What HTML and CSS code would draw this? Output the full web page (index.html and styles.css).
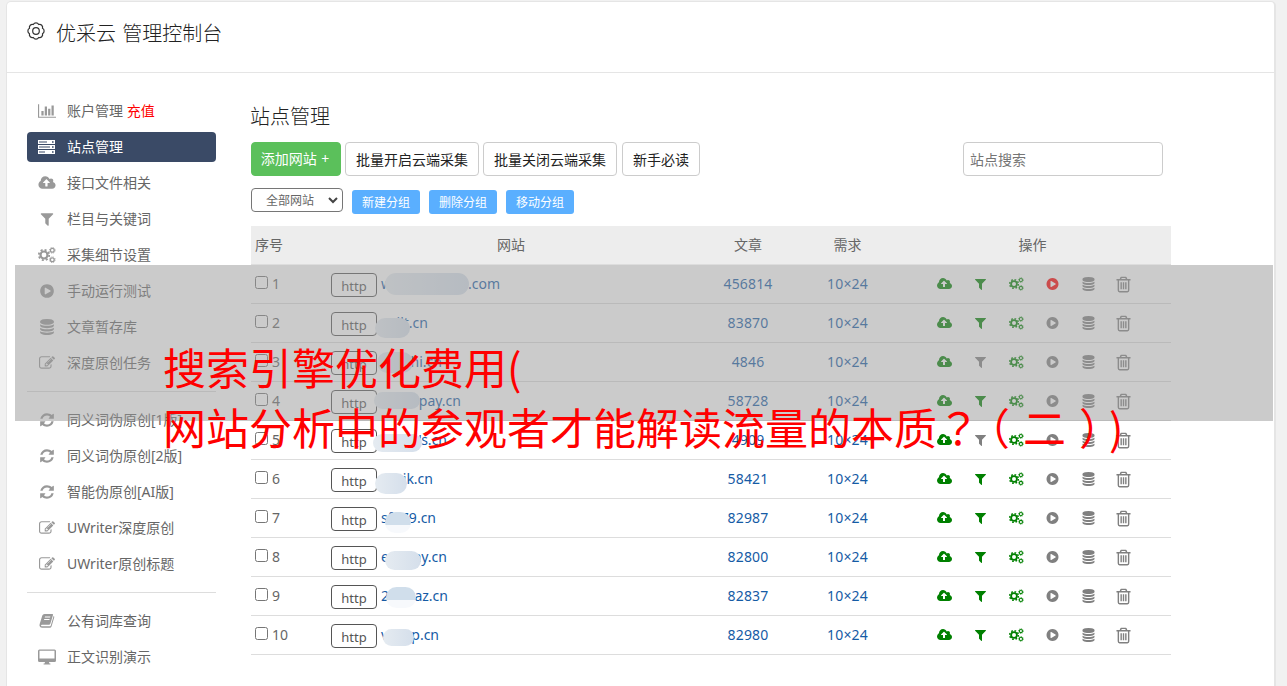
FILE: index.html
```html
<!DOCTYPE html>
<html lang="zh-CN">
<head>
<meta charset="utf-8">
<title>优采云 管理控制台</title>
<link rel="stylesheet" href="styles.css">
</head>
<body>
<svg class="sprite" width="0" height="0">
<symbol id="chart" viewBox="0 0 2048 1792"><path d="M640 896v512h-256v-512h256zm384-512v1024h-256v-1024h256zm1024 1152v128h-2048v-1536h128v1408h1920zm-640-896v768h-256v-768h256zm384-384v1152h-256v-1152h256z"/></symbol>
<symbol id="server" viewBox="0 0 17 14"><path fill-rule="evenodd" d="M0 0h17v4H0zM1 1.5v1h8v-1zM14 1.2v1.6h1.6V1.2zM0 5h17v4H0zM1 6.5v1h11v-1zM14 6.2v1.6h1.6V6.2zM0 10h17v4H0zM1 11.5v1h6v-1zM14 11.2v1.6h1.6v-1.6z"/></symbol>
<symbol id="cloud" viewBox="0 0 1920 1792"><path d="M1280 864q0-14-9-23l-352-352q-9-9-23-9t-23 9l-351 351q-10 12-10 24 0 14 9 23t23 9h224v352q0 13 9.5 22.5t22.5 9.5h192q13 0 22.5-9.5t9.5-22.5v-352h224q13 0 22.5-9.5t9.5-22.5zm640 288q0 159-112.500 271.500t-271.500 112.500h-1088q-185 0-316.500-131.500t-131.500-316.500q0-130 70-240t188-165q-2-30-2-43 0-212 150-362t362-150q156 0 285.500 87t188.500 231q71-62 166-62 106 0 181 75t75 181q0 76-41 138 130 31 213.500 135.500t83.500 238.500z"/></symbol>
<symbol id="filter" viewBox="0 0 1792 1792"><path d="M1595 295q17 41-14 70l-493 493v742q0 42-39 59-13 5-25 5-27 0-45-19l-256-256q-19-19-19-45v-486l-493-493q-31-29-14-70 17-39 59-39h1280q42 0 59 39z"/></symbol>
<symbol id="gears" viewBox="0 0 18 16"><g fill="none" stroke="currentColor"><circle cx="6" cy="8" r="3.500" stroke-width="2.200"/><circle cx="6" cy="8" r="5.200" stroke-width="1.800" stroke-dasharray="2.040 2.040"/><circle cx="14.300" cy="3.300" r="1.900" stroke-width="1.300"/><circle cx="14.300" cy="3.300" r="2.900" stroke-width=".8" stroke-dasharray="1.140 1.140"/><circle cx="14.300" cy="12.700" r="1.900" stroke-width="1.300"/><circle cx="14.300" cy="12.700" r="2.900" stroke-width=".8" stroke-dasharray="1.140 1.140"/></g></symbol>
<symbol id="play" viewBox="0 0 1792 1792"><path d="M896 128q209 0 385.500 103t279.500 279.500 103 385.500-103 385.500-279.500 279.500-385.500 103-385.500-103-279.500-279.500-103-385.500 103-385.500 279.500-279.500 385.500-103zm384 823q32-18 32-55t-32-55l-544-320q-31-19-64-1-32 19-32 56v640q0 37 32 56 16 8 32 8 17 0 32-9z"/></symbol>
<symbol id="db" viewBox="0 0 1792 1792"><path d="M896 768q237 0 443-43t325-127v170q0 69-103 128t-280 93.500-385 34.500-385-34.500-280-93.500-103-128v-170q119 84 325 127t443 43zm0 768q237 0 443-43t325-127v170q0 69-103 128t-280 93.500-385 34.500-385-34.500-280-93.500-103-128v-170q119 84 325 127t443 43zm0-384q237 0 443-43t325-127v170q0 69-103 128t-280 93.500-385 34.500-385-34.500-280-93.500-103-128v-170q119 84 325 127t443 43zm0-1152q208 0 385 34.500t280 93.500 103 128v128q0 69-103 128t-280 93.500-385 34.500-385-34.500-280-93.500-103-128v-128q0-69 103-128t280-93.500 385-34.500z"/></symbol>
<symbol id="edit" viewBox="0 0 1792 1792"><path d="M888 1184l116-116-152-152-116 116v56h96v96h56zm440-720q-16-16-33 1l-350 350q-17 17-1 33t33-1l350-350q17-17 1-33zm80 594v190q0 119-84.500 203.500t-203.500 84.500h-832q-119 0-203.500-84.500t-84.500-203.500v-832q0-119 84.500-203.500t203.500-84.500h832q63 0 117 25 15 7 18 23 3 17-9 29l-49 49q-14 14-32 8-23-6-45-6h-832q-66 0-113 47t-47 113v832q0 66 47 113t113 47h832q66 0 113-47t47-113v-126q0-13 9-22l64-64q15-15 35-7t20 29zm-96-738l288 288-672 672h-288v-288zm444 132l-92 92-288-288 92-92q28-28 68-28t68 28l152 152q28 28 28 68t-28 68z"/></symbol>
<symbol id="refresh" viewBox="0 0 1792 1792"><path d="M1639 1056q0 5-1 7-64 268-268 434.500t-478 166.500q-146 0-282.500-55t-243.500-157l-129 129q-19 19-45 19t-45-19-19-45v-448q0-26 19-45t45-19h448q26 0 45 19t19 45-19 45l-137 137q71 66 161 102t187 36q134 0 250-65t186-179q11-17 53-117 8-23 30-23h192q13 0 22.500 9.500t9.500 22.500zm25-800v448q0 26-19 45t-45 19h-448q-26 0-45-19t-19-45 19-45l138-138q-148-137-349-137-134 0-250 65t-186 179q-11 17-53 117-8 23-30 23h-199q-13 0-22.500-9.500t-9.500-22.500v-7q65-268 270-434.500t480-166.500q146 0 284 55.500t245 156.500l130-129q19-19 45-19t45 19 19 45z"/></symbol>
<symbol id="book" viewBox="0 0 16 16"><path fill-rule="evenodd" d="M5.500 1h7.800q1 0 .7 1l-2.600 8.600q-.4 1.200-1.600 1.200H3q-1.200 0-.9.900.2.600 1 .6h7.600q.8 0 1.100-.9L14.600 3q1 .4.600 1.500l-2.600 8.700q-.4 1.500-2 1.500H3Q1 14.700.6 13q-.2-1 .1-2L3.300 2.500Q3.800 1 5.500 1zM6 3.600l-.3.900h5.400l.3-.9zM5.300 6L5 6.900h5.400l.3-.9z"/></symbol>
<symbol id="desktop" viewBox="0 0 18 16"><path fill-rule="evenodd" d="M1.500.5h15q1.500 0 1.500 1.500v9.500q0 1.500-1.500 1.500H11l.4 1.500h1v1H5.600v-1h1L7 13H1.500Q0 13 0 11.500V2Q0 .5 1.500.5zm0 1.200v7.800h15V1.700z"/></symbol>
<symbol id="trash" viewBox="0 0 16 18"><path fill="none" stroke="currentColor" stroke-width="1.500" stroke-linejoin="round" d="M.5 4h15M2.500 4.200v11q0 1.500 1.300 1.500h8.400q1.300 0 1.300-1.500v-11M4.500 3.800l1-2.400h5l1 2.400M5.500 6.500v7.500M8 6.500v7.500M10.500 6.500v7.500"/></symbol>
<symbol id="cog" viewBox="0 0 18 18"><g fill="none" stroke="currentColor" stroke-width="1.200" stroke-linejoin="round"><path d="M6.320 2.530A3 3 0 0 1 11.680 2.530A3 3 0 0 1 15.470 6.320A3 3 0 0 1 15.470 11.680A3 3 0 0 1 11.680 15.470A3 3 0 0 1 6.320 15.470A3 3 0 0 1 2.530 11.680A3 3 0 0 1 2.530 6.320A3 3 0 0 1 6.320 2.530z"/><circle cx="9" cy="9" r="3.300"/></g></symbol>
</svg>

<div class="panel">
  <header class="top"><svg class="cog"><use href="#cog"/></svg><h1>优采云 管理控制台</h1></header>
  <div class="body">
    <nav class="side">
      <a class="item"><svg><use href="#chart"/></svg>账户管理&nbsp;<span class="pay">充值</span></a>
      <a class="item active"><svg class="srv"><use href="#server"/></svg>站点管理</a>
      <a class="item"><svg><use href="#cloud"/></svg>接口文件相关</a>
      <a class="item"><svg><use href="#filter"/></svg>栏目与关键词</a>
      <a class="item"><svg><use href="#gears"/></svg>采集细节设置</a>
      <a class="item"><svg><use href="#play"/></svg>手动运行测试</a>
      <a class="item"><svg><use href="#db"/></svg>文章暂存库</a>
      <a class="item"><svg><use href="#edit"/></svg>深度原创任务</a>
      <div class="rule"></div>
      <a class="item"><svg><use href="#refresh"/></svg>同义词伪原创[1版]</a>
      <a class="item"><svg><use href="#refresh"/></svg>同义词伪原创[2版]</a>
      <a class="item"><svg><use href="#refresh"/></svg>智能伪原创[AI版]</a>
      <a class="item"><svg><use href="#edit"/></svg>UWriter深度原创</a>
      <a class="item"><svg><use href="#edit"/></svg>UWriter原创标题</a>
      <div class="rule"></div>
      <a class="item"><svg><use href="#book"/></svg>公有词库查询</a>
      <a class="item"><svg><use href="#desktop"/></svg>正文识别演示</a>
    </nav>
    <main class="main">
      <h2>站点管理</h2>
      <div class="tools">
        <button class="btn add">添加网站 +</button><button class="btn wide">批量开启云端采集</button><button class="btn wide">批量关闭云端采集</button><button class="btn read">新手必读</button>
        <input class="search" type="text" placeholder="站点搜索">
      </div>
      <div class="groups">
        <div class="select">全部网站<svg viewBox="0 0 10 7"><path d="M1 1l4 4 4-4"/></svg></div>
        <button class="mini">新建分组</button><button class="mini">删除分组</button><button class="mini">移动分组</button>
      </div>
      <div class="row head"><span class="no">序号</span><span>网站</span><span>文章</span><span>需求</span><span>操作</span></div>

      <div class="row"><label class="no"><i class="box"></i>1</label><div class="site"><span class="http">http</span><span class="name" style="width:119px"><span>w</span><span>.com</span><i class="blob" style="left:4px;top:8px;width:84px;height:22px"></i></span></div><span class="num">456814</span><span class="num">10×24</span><div class="ops"><svg class="g"><use href="#cloud"/></svg><svg class="g"><use href="#filter"/></svg><svg class="g"><use href="#gears"/></svg><svg class="r"><use href="#play"/></svg><svg><use href="#db"/></svg><svg class="bin"><use href="#trash"/></svg></div></div>
      <div class="row"><label class="no"><i class="box"></i>2</label><div class="site"><span class="http">http</span><span class="name" style="width:47px"><span></span><span>ilt.cn</span><i class="blob" style="left:-6px;top:14px;width:35px;height:20px"></i></span></div><span class="num">83870</span><span class="num">10×24</span><div class="ops"><svg class="g"><use href="#cloud"/></svg><svg class="g"><use href="#filter"/></svg><svg class="g"><use href="#gears"/></svg><svg><use href="#play"/></svg><svg><use href="#db"/></svg><svg class="bin"><use href="#trash"/></svg></div></div>
      <div class="row"><label class="no"><i class="box"></i>3</label><div class="site"><span class="http">http</span><span class="name" style="width:61px"><span></span><span>hi.cn</span><i class="blob" style="left:-4px;top:9px;width:36px;height:21px"></i></span></div><span class="num">4846</span><span class="num">10×24</span><div class="ops"><svg class="g"><use href="#cloud"/></svg><svg><use href="#filter"/></svg><svg class="g"><use href="#gears"/></svg><svg><use href="#play"/></svg><svg><use href="#db"/></svg><svg class="bin"><use href="#trash"/></svg></div></div>
      <div class="row"><label class="no"><i class="box"></i>4</label><div class="site"><span class="http">http</span><span class="name" style="width:80px"><span></span><span>pay.cn</span><i class="blob" style="left:-7px;top:10px;width:46px;height:17px"></i></span></div><span class="num">58728</span><span class="num">10×24</span><div class="ops"><svg class="g"><use href="#cloud"/></svg><svg class="g"><use href="#filter"/></svg><svg class="g"><use href="#gears"/></svg><svg><use href="#play"/></svg><svg><use href="#db"/></svg><svg class="bin"><use href="#trash"/></svg></div></div>
      <div class="row"><label class="no"><i class="box"></i>5</label><div class="site"><span class="http">http</span><span class="name" style="width:66px"><span></span><span>'s.cn</span><i class="blob" style="left:-8px;top:13px;width:49px;height:18px"></i></span></div><span class="num">4909</span><span class="num">10×24</span><div class="ops"><svg class="g"><use href="#cloud"/></svg><svg><use href="#filter"/></svg><svg class="g"><use href="#gears"/></svg><svg><use href="#play"/></svg><svg><use href="#db"/></svg><svg class="bin"><use href="#trash"/></svg></div></div>
      <div class="row"><label class="no"><i class="box"></i>6</label><div class="site"><span class="http">http</span><span class="name" style="width:52px"><span></span><span>ik.cn</span><i class="blob" style="left:-6px;top:13px;width:32px;height:21px"></i></span></div><span class="num">58421</span><span class="num">10×24</span><div class="ops"><svg class="g"><use href="#cloud"/></svg><svg class="g"><use href="#filter"/></svg><svg class="g"><use href="#gears"/></svg><svg><use href="#play"/></svg><svg><use href="#db"/></svg><svg class="bin"><use href="#trash"/></svg></div></div>
      <div class="row"><label class="no"><i class="box"></i>7</label><div class="site"><span class="http">http</span><span class="name" style="width:55px"><span>sf</span><span>79.cn</span><i class="blob fade" style="left:4px;top:13px;width:26px;height:21px"></i></span></div><span class="num">82987</span><span class="num">10×24</span><div class="ops"><svg class="g"><use href="#cloud"/></svg><svg class="g"><use href="#filter"/></svg><svg class="g"><use href="#gears"/></svg><svg><use href="#play"/></svg><svg><use href="#db"/></svg><svg class="bin"><use href="#trash"/></svg></div></div>
      <div class="row"><label class="no"><i class="box"></i>8</label><div class="site"><span class="http">http</span><span class="name" style="width:66px"><span>e</span><span>ay.cn</span><i class="blob" style="left:4px;top:13px;width:36px;height:19px"></i></span></div><span class="num">82800</span><span class="num">10×24</span><div class="ops"><svg class="g"><use href="#cloud"/></svg><svg class="g"><use href="#filter"/></svg><svg class="g"><use href="#gears"/></svg><svg><use href="#play"/></svg><svg><use href="#db"/></svg><svg class="bin"><use href="#trash"/></svg></div></div>
      <div class="row"><label class="no"><i class="box"></i>9</label><div class="site"><span class="http">http</span><span class="name" style="width:67px"><span>2</span><span>az.cn</span><i class="blob fade" style="left:5px;top:10px;width:30px;height:21px"></i></span></div><span class="num">82837</span><span class="num">10×24</span><div class="ops"><svg class="g"><use href="#cloud"/></svg><svg class="g"><use href="#filter"/></svg><svg class="g"><use href="#gears"/></svg><svg><use href="#play"/></svg><svg><use href="#db"/></svg><svg class="bin"><use href="#trash"/></svg></div></div>
      <div class="row"><label class="no"><i class="box"></i>10</label><div class="site"><span class="http">http</span><span class="name" style="width:58px"><span>v</span><span>p.cn</span><i class="blob" style="left:2px;top:13px;width:31px;height:17px"></i></span></div><span class="num">82980</span><span class="num">10×24</span><div class="ops"><svg class="g"><use href="#cloud"/></svg><svg class="g"><use href="#filter"/></svg><svg class="g"><use href="#gears"/></svg><svg><use href="#play"/></svg><svg><use href="#db"/></svg><svg class="bin"><use href="#trash"/></svg></div></div>
    </main>
  </div>
</div>
<div class="band"></div>
<div class="caption"><div>搜索引擎优化费用(</div><div>网站分析中的参观者才能解读流量的本质<span lang="zh-TW" class="q">？</span><span class="open">（</span>二<span class="close">）</span>)</div></div>
</body>
</html>
```
FILE: styles.css
```css
* { box-sizing: border-box; }
body { margin: 0; height: 686px; overflow: hidden; position: relative; background: #f1f1f1; padding: 1px 11px 0 6px; font: 14px/20px "Noto Sans", "Noto Sans CJK SC", sans-serif; color: #666; }
.sprite { position: absolute; }
svg { fill: currentColor; display: block; overflow: visible; }
.panel { height: 685px; background: #fff; border: 1px solid #e5e5e5; border-right-width: 2px; border-bottom: 0; border-radius: 5px 5px 0 0; }
.top { height: 71px; border-bottom: 1px solid #e5e5e5; display: flex; align-items: flex-start; padding: 20px 0 0 20px; color: #333; }
.cog { width: 18px; height: 18px; }
h1, h2 { margin: 0; font-size: 20px; line-height: 24px; font-weight: 300; color: #222; }
h1 { margin-left: 11px; word-spacing: 1px; }
.body { display: flex; padding: 23px 0 0 20px; }
.side { width: 189px; display: flex; flex-direction: column; gap: 6px; }
.item { height: 30px; display: flex; align-items: center; padding-left: 11px; border-radius: 4px; white-space: nowrap; }
.item svg { width: 18px; height: 16px; margin-right: 11px; color: #999; }
.item .srv { height: 14px; width: 17px; margin-right: 12px; color: #fff; }
.item.active { background: #3a4a66; color: #fff; }
.pay { color: #f00; }
.rule { height: 1px; background: #ddd; margin: 7px 0; }
.main { width: 920px; margin-left: 35px; }
h2 { margin: 9px 0 0 -1px; }
.tools { display: flex; gap: 4px; margin-top: 13px; }
button { font-family: inherit; padding: 0; }
.btn { height: 34px; border: 1px solid #ccc; border-radius: 4px; background: #fff; color: #222; font-size: 14px; }
.add { width: 90px; padding-right: 2px; padding-bottom: 2px; background: #5bc05b; border-color: #5bc05b; color: #fff; word-spacing: 1px; }
.wide { width: 134px; }
.read { width: 78px; margin-left: 1px; }
.search { width: 200px; height: 34px; margin: 0 8px 0 auto; border: 1px solid #ccc; border-radius: 4px; padding: 0 6px; font: 14px "Noto Sans", "Noto Sans CJK SC", sans-serif; }
.search::placeholder { color: #757575; }
.groups { display: flex; gap: 9px; margin-top: 12px; height: 38px; align-items: flex-start; }
.select { width: 92px; height: 24px; border: 1px solid #767676; border-radius: 4px; display: flex; align-items: center; justify-content: space-between; padding: 1px 4px 0 14px; font-size: 12px; }
.select svg { width: 10px; height: 7px; fill: none; stroke: #444; stroke-width: 2; }
.mini { width: 68px; height: 24px; margin-top: 2px; border: 0; border-radius: 3px; background: #5aafff; color: #fff; font-size: 12px; }
.row { height: 39px; border-bottom: 1px solid #ddd; display: grid; grid-template-columns: 76px 368px 106px 93px 277px; }
.head { background: #ededed; text-align: center; line-height: 38px; }
.no { text-align: left; padding-left: 4px; }
label.no { display: flex; gap: 4px; padding-top: 9px; }
.box { width: 13px; height: 13px; border: 1px solid #767676; border-radius: 2.5px; background: #fff; margin-top: 2px; }
.site { display: flex; padding-left: 4px; }
.http { width: 46px; height: 24px; margin-top: 8px; border: 1px solid #555; border-radius: 4px; text-align: center; font-size: 13px; line-height: 25px; color: #555; }
.name { position: relative; margin-left: 4px; display: flex; justify-content: space-between; line-height: 38px; color: #155ba5; white-space: nowrap; }
.blob { position: absolute; border-radius: 11px; background: linear-gradient(90deg, #e5ebf1, #d5dfeb); }
.fade { background: linear-gradient(#d0deeb 60%, #f7f9fc 60%); }
.num { text-align: center; line-height: 38px; color: #155ba5; letter-spacing: .15px; }
.ops { display: grid; grid-template-columns: repeat(6, 36px); padding-left: 32px; height: 38px; justify-items: center; align-items: center; color: #808080; }
.ops svg { width: 15px; height: 14px; }
.ops .bin { width: 15px; height: 17px; margin-right: 1px; }
.g { color: green; }
.r { color: #f00; }
.band { position: absolute; left: 15px; top: 265px; width: 1258px; height: 156px; background: rgba(151, 151, 151, .5); }
.caption { position: absolute; left: 163px; top: 336px; color: #f00; font: 43px/60px "Noto Sans CJK SC", sans-serif; white-space: nowrap; text-spacing-trim: space-all; }
.open { margin: 0 13px 0 -13px; }
.close { margin: 0 -13px 0 13px; }
.q { font-family: "Noto Sans CJK TC"; }
```
